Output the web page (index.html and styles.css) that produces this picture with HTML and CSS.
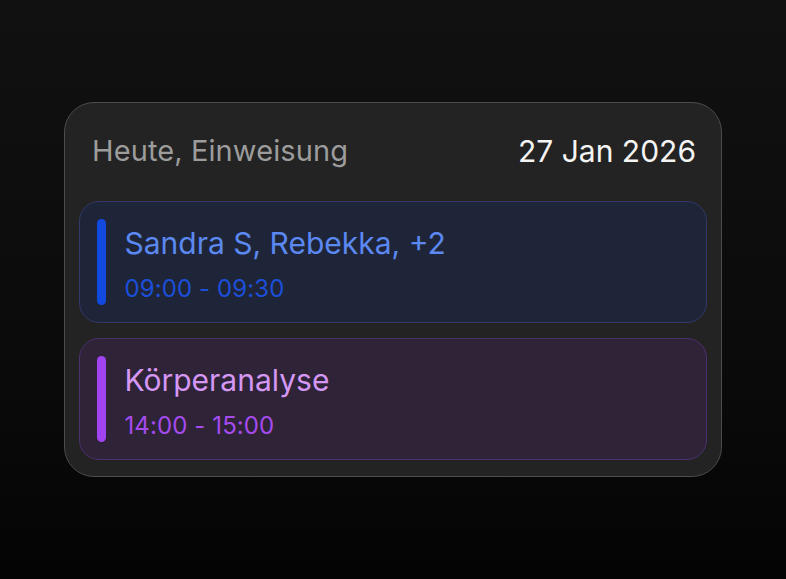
FILE: index.html
```html
<!DOCTYPE html>
<html lang="de">
<head>
<meta charset="utf-8">
<title>Heute</title>
<link rel="stylesheet" href="styles.css">
</head>
<body>
<div class="stage">
  <section class="card">
    <header class="card-head">
      <span class="head-title">Heute, Einweisung</span>
      <span class="head-date">27 Jan 2026</span>
    </header>
    <div class="event event-blue">
      <div class="event-bar"></div>
      <div class="event-text">
        <div class="event-title">Sandra S, Rebekka, +2</div>
        <div class="event-time">09:00 - 09:30</div>
      </div>
    </div>
    <div class="event event-purple">
      <div class="event-bar"></div>
      <div class="event-text">
        <div class="event-title">Körperanalyse</div>
        <div class="event-time">14:00 - 15:00</div>
      </div>
    </div>
  </section>
</div>
</body>
</html>
```
FILE: styles.css
```css
* { box-sizing: border-box; }
html, body { margin: 0; padding: 0; }
body {
  width: 786px;
  height: 579px;
  overflow: hidden;
  background: linear-gradient(180deg, #111111 0%, #0b0b0b 60%, #040404 100%);
  font-family: Inter, "Noto Sans", sans-serif;
}
.stage {
  padding: 102px 0 0 64px;
}
.card {
  width: 658px;
  height: 375px;
  border-radius: 30px;
  border: 1px solid #4c4c4c;
  background: #232323;
  padding: 0 14px 14px 14px;
  display: flex;
  flex-direction: column;
  gap: 15px;
}
.card-head {
  height: 83px;
  padding: 13px 11px 0 13px;
  display: flex;
  align-items: center;
  justify-content: space-between;
  font-size: 29px;
  line-height: 36px;
}
.head-title { color: #9c9c9c; letter-spacing: 0.1px; }
.head-date { color: #f4f4f4; font-size: 30px; }
.event {
  height: 122px;
  border-radius: 20px;
  border: 1.5px solid;
  padding: 17px 17px 17px 16.5px;
  display: flex;
  gap: 19px;
}
.event-bar {
  width: 9px;
  height: 86px;
  border-radius: 5px;
}
.event-text {
  padding-top: 7px;
  display: flex;
  flex-direction: column;
  gap: 14px;
}
.event-title { font-size: 30px; line-height: 34px; }
.event-time { font-size: 24px; line-height: 30px; letter-spacing: 0.1px; }
.event-blue { background: #1f2538; border-color: #33376a; }
.event-blue .event-bar { background: #1249e0; }
.event-blue .event-title { color: #5b88f1; }
.event-blue .event-time { color: #1b4fd9; }
.event-purple { background: #2e2337; border-color: #4d3070; }
.event-purple .event-bar { background: #a243f2; }
.event-purple .event-title { color: #d597f4; }
.event-purple .event-time { color: #a54bee; }
```
